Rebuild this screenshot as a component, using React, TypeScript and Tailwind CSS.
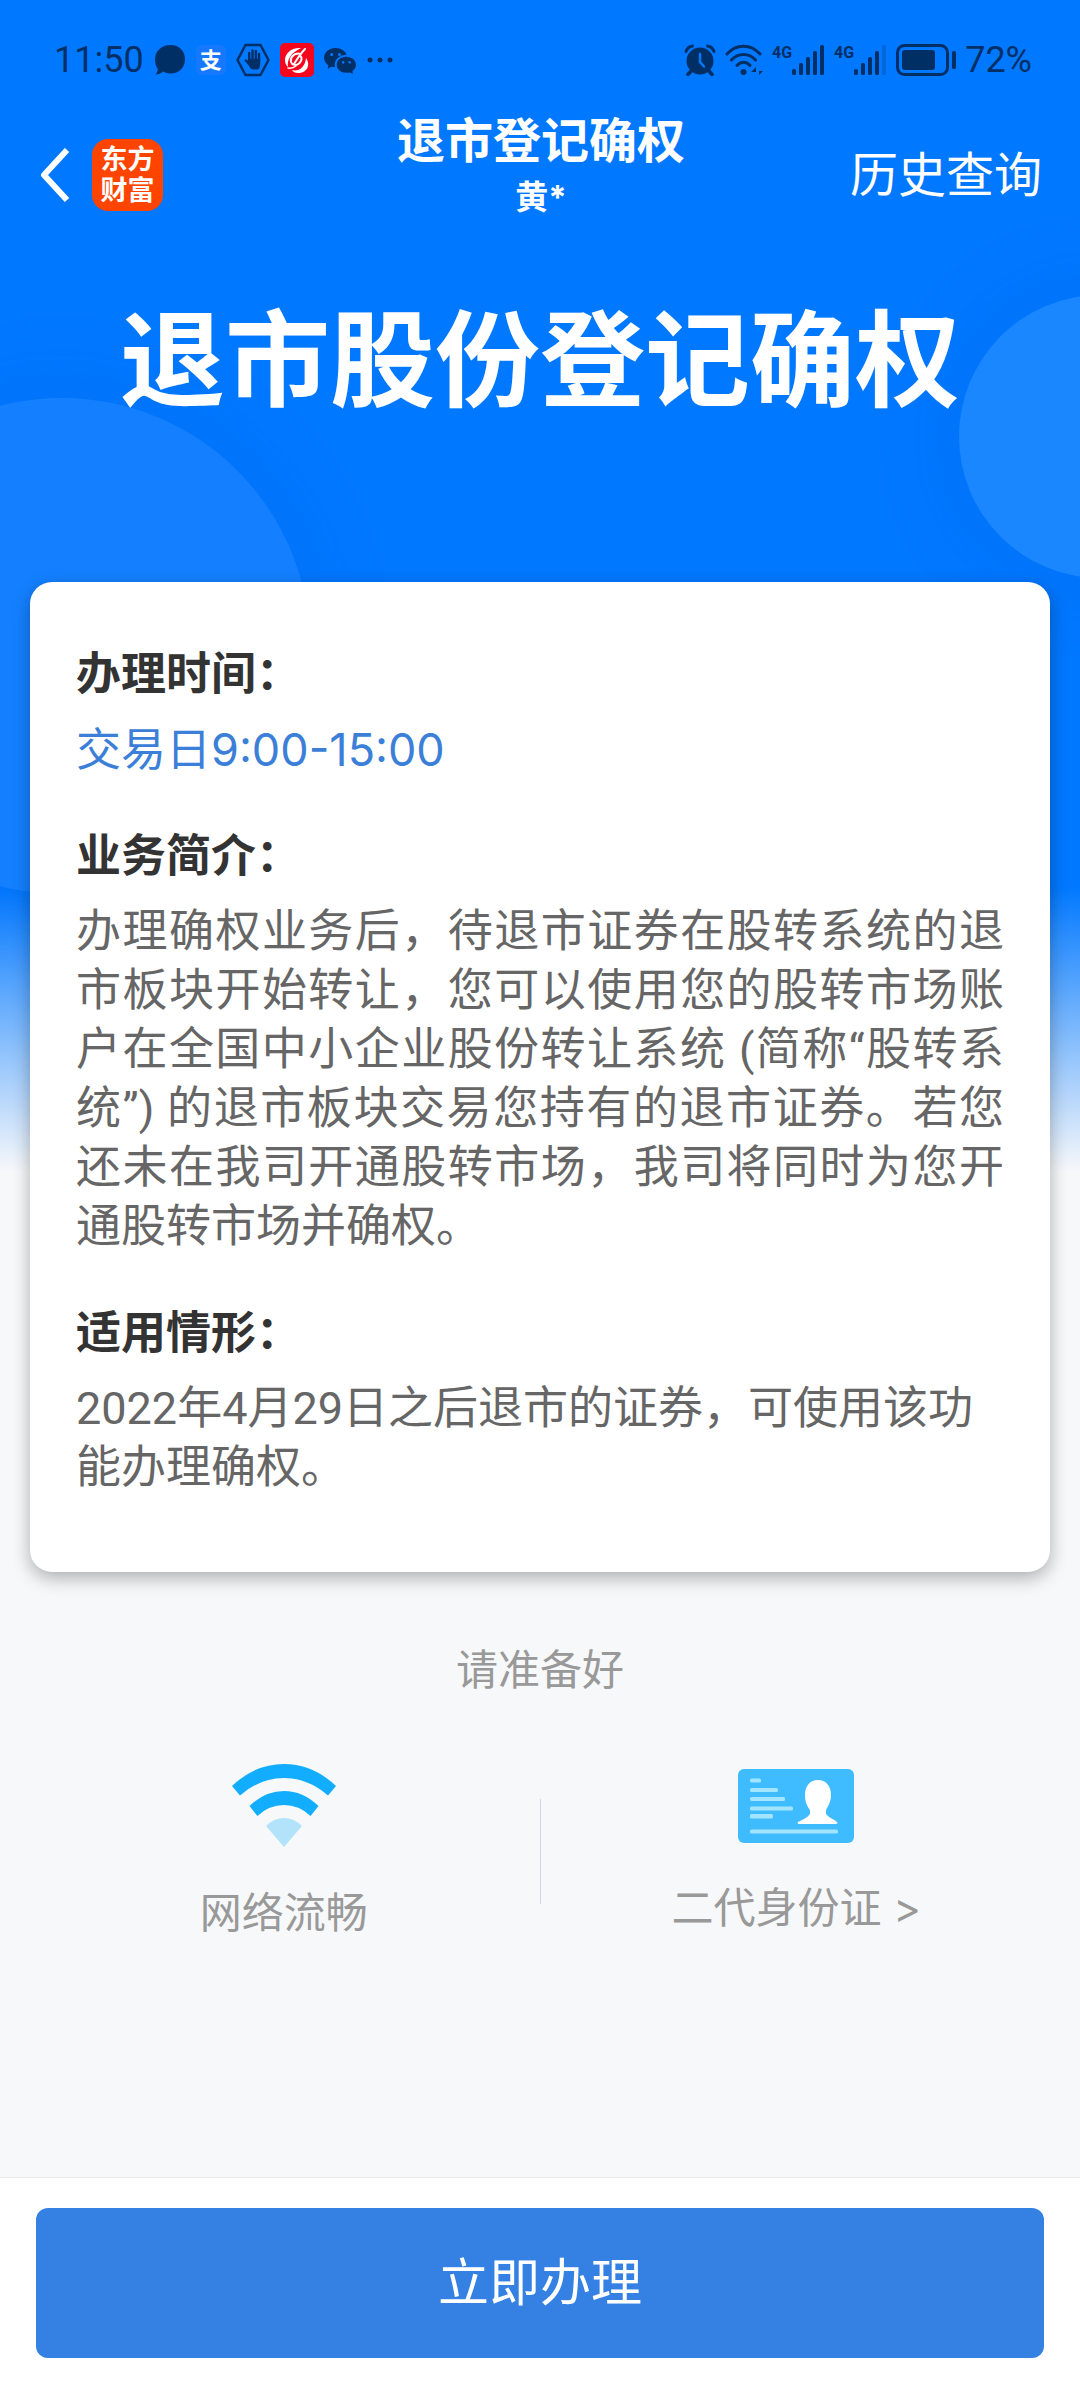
import type { ReactNode } from 'react';
import { BsWechat } from 'react-icons/bs';

type Section = {
  title: string;
  body: string;
  className: string;
};

const sections: Section[] = [
  {
    title: '办理时间：',
    body: '交易日9:00-15:00',
    className: 'text-[#3b7fd8]',
  },
  {
    title: '业务简介：',
    body: '办理确权业务后，待退市证券在股转系统的退市板块开始转让，您可以使用您的股转市场账户在全国中小企业股份转让系统 (简称“股转系统”) 的退市板块交易您持有的退市证券。若您还未在我司开通股转市场，我司将同时为您开通股转市场并确权。',
    className: "text-justify text-[#666] font-['Roboto','Noto_Sans_CJK_SC',sans-serif]",
  },
  {
    title: '适用情形：',
    body: '2022年4月29日之后退市的证券，可使用该功能办理确权。',
    className: "text-[#666] font-['Roboto','Noto_Sans_CJK_SC',sans-serif]",
  },
];

function Signal({ weak = false }: { weak?: boolean }) {
  return (
    <div className="flex">
      <span className="font-[Roboto] text-[16px] leading-[18px] font-bold">4G</span>
      <svg viewBox="0 0 33 32" className="h-8 w-[33px]" fill="currentColor">
        <rect x="0" y="25" width="4" height="6" rx="1.5" />
        <rect x="7" y="19" width="4" height="12" rx="1.5" />
        <rect x="14" y="13" width="4" height="18" rx="1.5" />
        <rect x="21" y="7" width="4" height="24" rx="1.5" />
        <rect x="28" y="1" width="4" height="30" rx="1.5" opacity={weak ? 0.25 : 1} />
      </svg>
    </div>
  );
}

function StatusBar() {
  return (
    <div className="flex h-[100px] items-center justify-between pt-5 pr-12 pl-[54px] text-[#002f66]">
      <div className="flex items-center gap-[10px]">
        <span className="font-[Roboto] text-[36px] leading-10">11:50</span>
        <svg viewBox="0 0 32 32" className="h-8 w-8" fill="currentColor">
          <path d="M16.5 1C25 1 31 7 31 15.2S25 29.5 16.5 29.5c-3 0-5.500-.7-7.500-2-2 2-4.500 3-7.500 3 1.500-1.800 2.300-3.600 2.300-5.500C2 22.500 1 19.200 1 15.200 1 7 8 1 16.500 1z" />
        </svg>
        <span className="flex h-[30px] w-[30px] items-center justify-center rounded-md bg-[#1677ff] text-[22px] leading-[30px] font-bold text-white">
          支
        </span>
        <svg viewBox="0 0 34 34" className="h-[34px] w-[34px]" fill="none" stroke="currentColor">
          <path d="M9.500 2h15L32.500 17l-8 15h-15L1.500 17z" strokeWidth="2.500" strokeLinejoin="round" />
          <path d="M13.200 17v-7M16.500 16V7.500M19.800 16V8M23 17v-6M13.200 21L9.700 17.500" strokeWidth="2.400" strokeLinecap="round" />
          <path d="M12 16h12.200v5.500c0 3-1.500 5-3.500 5h-3.500c-1.500 0-2.500-.8-3.200-2L11 20z" fill="currentColor" stroke="none" />
        </svg>
        <svg viewBox="0 0 34 34" className="h-[34px] w-[34px]">
          <rect width="34" height="34" rx="5" fill="#f5061d" />
          <path d="M21 5C12 4 5 10 5 17c0 3 1 5 3 7-1-8 3-14 13-19z" fill="#fff" />
          <path d="M12 27c6 2 13-2 14-12 5 7 1 15-8 15-3 0-5-1-6-3z" fill="#fff" />
          <g fill="none" stroke="#fff" strokeLinecap="round" strokeWidth="2">
            <path d="M25 6C20 11 18 15 14 21" />
            <path d="M19 10.500c-6 0-9 4.500-8 8.500 1 3 5 4 8 1.500 3-3 3.500-6 1-8" />
            <path d="M8 25c3 .5 6-.5 8-2" strokeWidth="1.500" />
          </g>
        </svg>
        <BsWechat className="h-8 w-8" />
        <svg viewBox="0 0 28 8" className="h-2 w-7" fill="currentColor">
          <circle cx="4" cy="4" r="2.500" />
          <circle cx="14" cy="4" r="2.500" />
          <circle cx="24" cy="4" r="2.500" />
        </svg>
      </div>
      <div className="flex items-center gap-[9px]">
        <svg viewBox="0 0 32 32" className="h-8 w-8" fill="none" stroke="currentColor" strokeLinecap="round">
          <circle cx="16" cy="17" r="13.500" fill="currentColor" stroke="none" />
          <path d="M2 7.500C3 4.500 5.500 2.500 8.500 2M30 7.500C29 4.500 26.500 2.500 23.500 2" strokeWidth="3" />
          <path d="M7 27l-3 3.500M25 27l3 3.500" strokeWidth="3.500" />
          <path d="M16 10v8l4 4.500" stroke="#0078ff" strokeWidth="2.500" />
        </svg>
        <svg viewBox="0 0 38 32" className="h-8 w-[38px]" fill="none" stroke="currentColor" strokeWidth="3" strokeLinecap="round">
          <path d="M2 10C11-.5 26-.5 35 10M6.500 16c6.500-7.500 17.500-7.500 24 0M12 21.500c3.500-4.500 9.500-4.500 13 0" />
          <circle cx="18.500" cy="28" r="3" fill="currentColor" stroke="none" />
          <path d="M31 31v-8l-5 5h5M34 23v8l4-4h-4z" fill="currentColor" stroke="none" />
        </svg>
        <Signal />
        <Signal weak />
        <svg viewBox="0 0 60 32" className="h-8 w-[60px]" fill="none" stroke="currentColor">
          <rect x="1.500" y="1.500" width="50" height="29" rx="7" strokeWidth="3" />
          <rect x="6" y="6" width="33" height="20" rx="3" fill="currentColor" stroke="none" />
          <rect x="56" y="7" width="4" height="18" rx="1.500" fill="currentColor" stroke="none" />
        </svg>
        <span className="font-[Roboto] text-[36px] leading-10">72%</span>
      </div>
    </div>
  );
}

function Header() {
  return (
    <header className="grid h-[150px] grid-cols-[1fr_auto_1fr] items-center pr-[38px] pl-10 text-white">
      <div className="flex items-center gap-[22px]">
        <button type="button" aria-label="返回">
          <svg viewBox="0 0 30 54" className="h-[54px] w-[30px]" fill="none" stroke="currentColor" strokeWidth="6">
            <path d="M27 2L4 27l23 25" strokeLinejoin="round" />
          </svg>
        </button>
        <div className="flex h-[72px] w-[71px] items-center justify-center rounded-2xl bg-[#ff4400]">
          <span className="w-[54px] text-[27px] leading-[31px] font-bold">东方财富</span>
        </div>
      </div>
      <div className="flex flex-col self-start pt-3 text-center font-bold">
        <span className="text-[48px] leading-[58px]">退市登记确权</span>
        <span className="text-[33px] leading-[54px]">黄*</span>
      </div>
      <a href="#history" className="justify-self-end text-[48px] leading-[58px]">历史查询</a>
    </header>
  );
}

function WifiIcon() {
  return (
    <svg viewBox="0 0 104 84" className="h-[84px] w-[104px]">
      <path d="M0 22Q23 0 52 0t52 22l-8 9.500Q76 14 52 14T8 31.500z" fill="#12adff" />
      <path d="M17.500 42Q33 27 52 27t34.500 15l-8 10Q67 41 52 41T25.500 52z" fill="#12adff" />
      <path d="M34 62Q42 54 52 54t18 8L52 83z" fill="#b3e3fb" />
    </svg>
  );
}

function IdCardIcon() {
  return (
    <svg viewBox="0 0 116 74" className="h-[74px] w-[116px]">
      <rect width="116" height="74" rx="6" fill="#3fbcff" />
      <g fill="#a3e4ff">
        <rect x="12" y="9.500" width="11" height="4" rx="1.500" />
        <rect x="12" y="19" width="28" height="4" rx="1.500" />
        <rect x="12" y="28" width="35" height="4" rx="1.500" />
        <rect x="12" y="37.500" width="43" height="4" rx="1.500" />
        <rect x="12" y="45" width="23" height="4.500" rx="1.500" />
        <rect x="12" y="60.500" width="88" height="4" rx="1.500" />
      </g>
      <path d="M80 11c8 0 13 6 13 15 0 7-3 11-5 15v4c3 4 8 5 11 8 1 1 0 2-1 2H61c-1 0-2-1-1-2 4-2 9-4 12-8v-4c-3-4-5-8-5-15 0-9 5-15 13-15z" fill="#fff" />
    </svg>
  );
}

function PrepareItem({ icon, children }: { icon: ReactNode; children: ReactNode }) {
  return (
    <div className="flex flex-1 flex-col items-center gap-[35px]">
      {icon}
      {children}
    </div>
  );
}

export default function App() {
  return (
    <div className="relative flex min-h-screen flex-col overflow-hidden bg-[linear-gradient(#0078ff_886px,#f7f8fa_1172px)] font-['Inter','Noto_Sans_CJK_SC',sans-serif]">
      {/* hero decoration */}
      <div className="absolute top-[398px] left-[-186px] size-[496px] rounded-full bg-[#1480ff] shadow-[0_0_90px_rgba(0,80,200,0.16)]" />
      <div className="absolute top-[295px] right-[-162px] size-[283px] rounded-full bg-[#1a86ff] shadow-[0_0_90px_rgba(0,80,200,0.16)]" />

      <div className="relative flex flex-1 flex-col">
        <StatusBar />
        <Header />
        <h1 className="mt-12 mb-40 text-center text-[105px] leading-[124px] font-bold text-white">退市股份登记确权</h1>

        <main className="mx-[30px] flex flex-col gap-[47px] rounded-[22px] bg-white px-[46px] pt-[62px] pb-[75px] shadow-[0_6px_18px_rgba(0,0,0,0.3)]">
          {sections.map(({ title, body, className }) => (
            <section key={title} className="flex flex-col gap-[17px] text-[45px] leading-[59px]">
              <h2 className="font-bold text-[#333]">{title}</h2>
              <p className={className}>{body}</p>
            </section>
          ))}
        </main>

        <div className="px-7 pt-[68px] pb-16 text-[42px] leading-[60px] text-[#999]">
          <p className="text-center">请准备好</p>
          <div className="mt-16 flex items-start">
            <PrepareItem icon={<WifiIcon />}>
              <span>网络流畅</span>
            </PrepareItem>
            <div className="mt-[35px] h-[105px] w-px bg-[#d5d7da]" />
            <a href="#id-card" className="flex flex-1 pt-[5px]">
              <PrepareItem icon={<IdCardIcon />}>
                <span>二代身份证 &gt;</span>
              </PrepareItem>
            </a>
          </div>
        </div>

        <footer className="mt-auto border-t border-[#ebebeb] bg-white px-9 py-[30px]">
          <button type="button" className="h-[150px] w-full rounded-xl bg-[#3480e3] text-[51px] text-white">
            立即办理
          </button>
        </footer>
      </div>
    </div>
  );
}
